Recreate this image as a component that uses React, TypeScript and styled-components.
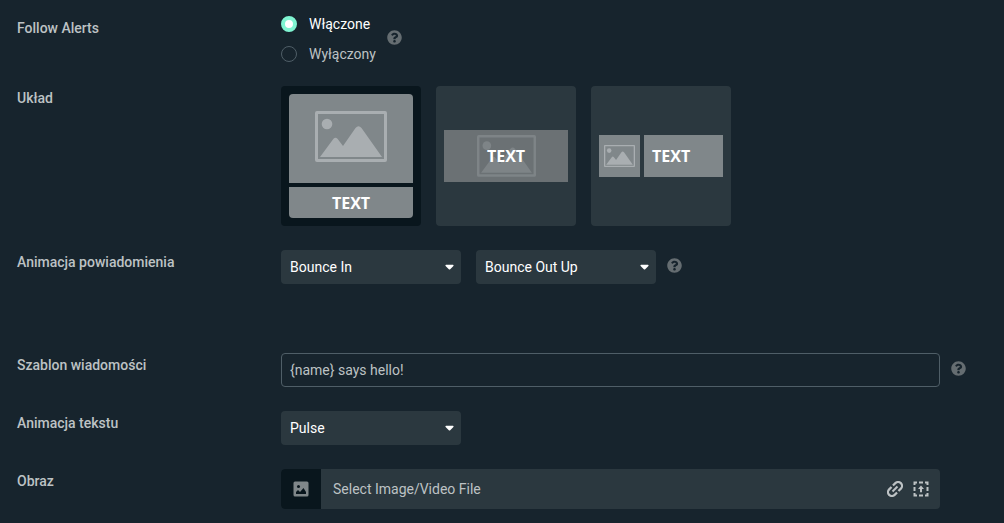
import React, { useState } from "react";
import styled, { createGlobalStyle } from "styled-components";

const GlobalStyle = createGlobalStyle`
  *, *::before, *::after { box-sizing: border-box; }
  html { min-height: 100%; background: #17242d; }
  body {
    margin: 0;
    background: #17242d;
    color: #bdc2c4;
    font: 400 14px/20px Roboto, "Liberation Sans", sans-serif;
  }
`;

const Form = styled.form`
  display: flex;
  flex-direction: column;
  gap: 24px;
  padding: 16px 17px 14px;
`;

const Row = styled.div<{ $spaced?: boolean }>`
  display: grid;
  grid-template-columns: 264px minmax(0, 1fr) 47px;
  margin-top: ${(p) => (p.$spaced ? "45px" : "0")};
`;

const labelText = `
  padding-top: 2px;
  font-weight: 500;
  color: #bdc2c4;
`;
const FieldLabel = styled.label`
  ${labelText}
`;
const GroupLabel = styled.span`
  ${labelText}
`;

const Inline = styled.div<{ $gap: number }>`
  display: flex;
  align-items: center;
  gap: ${(p) => p.$gap}px;
`;

const RadioList = styled.div`
  display: flex;
  flex-direction: column;
  gap: 14px;
`;

const RadioLabel = styled.label<{ $on: boolean }>`
  display: flex;
  align-items: center;
  gap: 12px;
  line-height: 16px;
  color: ${(p) => (p.$on ? "#ffffff" : "#bdc2c4")};
`;

const RadioInput = styled.input`
  appearance: none;
  width: 16px;
  height: 16px;
  margin: 0;
  border: 1px solid #4f5e67;
  border-radius: 50%;
  &:checked {
    border: 4px solid #80f5d2;
    background: #ffffff;
  }
`;

const HelpButton = styled.button`
  display: flex;
  padding: 0;
  border: 0;
  background: none;
  color: #656d71;
`;

const InlineHelp = styled.span`
  display: flex;
  padding-bottom: 4px;
`;

const Cards = styled.div`
  display: flex;
  gap: 15px;
`;

const Card = styled.button<{ $active: boolean }>`
  display: flex;
  align-items: center;
  width: 140px;
  height: 140px;
  padding: 8px;
  border: 0;
  border-radius: 4px;
  background: ${(p) => (p.$active ? "#09161d" : "#2b383f")};
  color: #ffffff;
  font: 700 16px/20px "Open Sans", "Noto Sans", sans-serif;
`;

const StackPreview = styled.span`
  display: grid;
  grid-template-rows: 1fr 31px;
  gap: 4px;
  width: 100%;
  height: 100%;
  overflow: hidden;
  border-radius: 4px;
`;

const OverlayPreview = styled.span`
  display: grid;
  place-items: center;
  width: 100%;
  height: 52px;
  background: #6b7174;
  & > * { grid-area: 1 / 1; }
`;

const SidePreview = styled.span`
  display: grid;
  grid-template-columns: 41px 1fr;
  gap: 4px;
  width: 100%;
  height: 42px;
`;

const Tile = styled.span<{ $start?: boolean; $raised?: boolean }>`
  display: flex;
  align-items: center;
  justify-content: ${(p) => (p.$start ? "flex-start" : "center")};
  padding-left: ${(p) => (p.$start ? "8px" : "0")};
  padding-bottom: ${(p) => (p.$raised ? "4px" : "0")};
  background: #80878a;
`;

const SelectBox = styled.span`
  display: grid;
  align-items: center;
  width: 180px;
  & > * { grid-area: 1 / 1; }
  & > svg { justify-self: end; margin-right: 7px; pointer-events: none; }
`;

const Select = styled.select`
  appearance: none;
  width: 100%;
  height: 34px;
  padding: 0 28px 0 9px;
  border: 0;
  border-radius: 4px;
  background: #2b383f;
  color: #ffffff;
  font: inherit;
`;

const TextInput = styled.input`
  width: 100%;
  height: 34px;
  padding: 0 8px;
  border: 1px solid #4f5e67;
  border-radius: 4px;
  background: transparent;
  color: #bdc2c4;
  font: inherit;
`;

const HelpCell = styled.div`
  padding: 8px 0 0 11px;
`;

const FileField = styled.div`
  display: flex;
  align-items: center;
  height: 40px;
  overflow: hidden;
  border-radius: 4px;
  background: #2b383f;
`;

const FileThumb = styled.span`
  display: grid;
  place-items: center;
  width: 40px;
  height: 100%;
  background: #09161d;
`;

const FileButton = styled.button`
  flex: 1;
  height: 100%;
  padding: 0 12px;
  border: 0;
  background: none;
  color: #bdc2c4;
  font: inherit;
  text-align: left;
`;

const FileActions = styled.span`
  display: flex;
  gap: 10px;
  padding-right: 11px;
`;

const IconButton = styled.button`
  display: flex;
  padding: 0;
  border: 0;
  background: none;
  color: #bdc2c4;
`;

function Help() {
  return (
    <HelpButton type="button" aria-label="Pomoc">
      <svg width="15" height="15" viewBox="0 0 512 512" fill="currentColor">
        <path d="M504 256c0 136.997-111.043 248-248 248S8 392.997 8 256C8 119.083 119.043 8 256 8s248 111.083 248 248zM262.655 90c-54.497 0-89.255 22.957-116.549 63.758-3.536 5.286-2.353 12.415 2.715 16.258l34.699 26.31c5.205 3.947 12.621 3.008 16.665-2.122 17.864-22.658 30.113-35.797 57.303-35.797 20.429 0 45.698 13.148 45.698 32.958 0 14.976-12.363 22.667-32.534 33.976C247.128 238.528 216 254.941 216 296v4c0 6.627 5.373 12 12 12h56c6.627 0 12-5.373 12-12v-1.333c0-28.462 83.186-29.647 83.186-106.667 0-58.002-60.165-102-116.531-102zM256 338c-25.365 0-46 20.635-46 46 0 25.364 20.635 46 46 46s46-20.636 46-46c0-25.365-20.635-46-46-46z" />
      </svg>
    </HelpButton>
  );
}

function Picture({ width, color = "#a9aeb1" }: { width: number; color?: string }) {
  return (
    <svg width={width} viewBox="0 0 72 51" fill={color}>
      <path fillRule="evenodd" d="M2 0h68a2 2 0 0 1 2 2v47a2 2 0 0 1-2 2H2a2 2 0 0 1-2-2V2a2 2 0 0 1 2-2Zm1 3v45h66V3Z" />
      <circle cx="12" cy="13" r="5.3" />
      <path d="M5 46 18.500 27.800Q20.500 25.500 22.500 27.800L28 35 40.500 17Q43.500 13.500 46.500 17L67 46Z" />
    </svg>
  );
}

function Dropdown({ id, label, options }: { id: string; label?: string; options: string[] }) {
  return (
    <SelectBox>
      <Select id={id} aria-label={label}>
        {options.map((o) => (
          <option key={o}>{o}</option>
        ))}
      </Select>
      <svg width="9" height="6" viewBox="0 0 9 6" fill="#ffffff">
        <path d="M1 .8h7q1 .4.400 1.200L5.200 5.300q-.7.600-1.400 0L.6 2Q0 1.200 1 .8Z" />
      </svg>
    </SelectBox>
  );
}

export default function App() {
  const [enabled, setEnabled] = useState(true);
  const [layout, setLayout] = useState(0);
  const [message, setMessage] = useState("{name} says hello!");

  return (
    <>
      <GlobalStyle />
      <Form>
        <Row role="radiogroup" aria-labelledby="alerts-label">
          <GroupLabel id="alerts-label">Follow Alerts</GroupLabel>
          <Inline $gap={11}>
            <RadioList>
              <RadioLabel $on={enabled}>
                <RadioInput type="radio" name="alerts" checked={enabled} onChange={() => setEnabled(true)} />
                Włączone
              </RadioLabel>
              <RadioLabel $on={!enabled}>
                <RadioInput type="radio" name="alerts" checked={!enabled} onChange={() => setEnabled(false)} />
                Wyłączony
              </RadioLabel>
            </RadioList>
            <InlineHelp><Help /></InlineHelp>
          </Inline>
        </Row>

        <Row role="group" aria-labelledby="layout-label">
          <GroupLabel id="layout-label">Układ</GroupLabel>
          <Cards>
            <Card type="button" $active={layout === 0} onClick={() => setLayout(0)}>
              <StackPreview>
                <Tile $raised><Picture width={72} /></Tile>
                <Tile>TEXT</Tile>
              </StackPreview>
            </Card>
            <Card type="button" $active={layout === 1} onClick={() => setLayout(1)}>
              <OverlayPreview>
                <Picture width={59} color="#7e8487" />
                <span>TEXT</span>
              </OverlayPreview>
            </Card>
            <Card type="button" $active={layout === 2} onClick={() => setLayout(2)}>
              <SidePreview>
                <Tile><Picture width={31} /></Tile>
                <Tile $start>TEXT</Tile>
              </SidePreview>
            </Card>
          </Cards>
        </Row>

        <Row>
          <FieldLabel htmlFor="animation-in">Animacja powiadomienia</FieldLabel>
          <Inline $gap={11}>
            <Inline $gap={15}>
              <Dropdown id="animation-in" options={["Bounce In", "Fade In", "Zoom In"]} />
              <Dropdown id="animation-out" label="Animacja wyjścia" options={["Bounce Out Up", "Fade Out", "Zoom Out"]} />
            </Inline>
            <InlineHelp><Help /></InlineHelp>
          </Inline>
        </Row>

        <Row $spaced>
          <FieldLabel htmlFor="template">Szablon wiadomości</FieldLabel>
          <TextInput id="template" value={message} onChange={(e) => setMessage(e.target.value)} />
          <HelpCell><Help /></HelpCell>
        </Row>

        <Row>
          <FieldLabel htmlFor="text-animation">Animacja tekstu</FieldLabel>
          <Dropdown id="text-animation" options={["Pulse", "Bounce", "Wiggle"]} />
        </Row>

        <Row>
          <FieldLabel htmlFor="image-file">Obraz</FieldLabel>
          <FileField>
            <FileThumb>
              <svg width="16" height="16" viewBox="0 0 16 16">
                <rect x=".5" y=".5" width="15" height="15" rx="1.500" fill="#80878a" />
                <circle cx="5.500" cy="5.500" r="1.500" fill="#09161d" />
                <path d="M3 13v-2l2-2 2 2 3.500-4 2.500 4v2Z" fill="#09161d" />
              </svg>
            </FileThumb>
            <FileButton id="image-file" type="button">Select Image/Video File</FileButton>
            <FileActions>
              <IconButton type="button" aria-label="Link">
                <svg width="16" height="16" viewBox="0 0 16 16" fill="none" stroke="currentColor" strokeWidth="2.2">
                  <g transform="rotate(-45 8 8)">
                    <path d="M7 4.100H3.600a3.900 3.900 0 0 0 0 7.800H7M9 4.100h3.400a3.900 3.900 0 0 1 0 7.800H9" />
                    <path d="M4.500 8h7" strokeWidth="2" />
                  </g>
                </svg>
              </IconButton>
              <IconButton type="button" aria-label="Wybierz plik">
                <svg width="16" height="16" viewBox="0 0 16 16" fill="none" stroke="currentColor" strokeWidth="2">
                  <path d="M4 1.500H1.500V4M6 1.500h4M12 1.500h2.500V4M1.500 6v4M14.500 6v4M1.500 12v2.500H4M6 14.500h4M12 14.500h2.500V12" />
                  <path d="M8 11.300V7" />
                  <path d="M8 4.600l3 3.400H5Z" fill="currentColor" stroke="none" />
                </svg>
              </IconButton>
            </FileActions>
          </FileField>
        </Row>
      </Form>
    </>
  );
}
